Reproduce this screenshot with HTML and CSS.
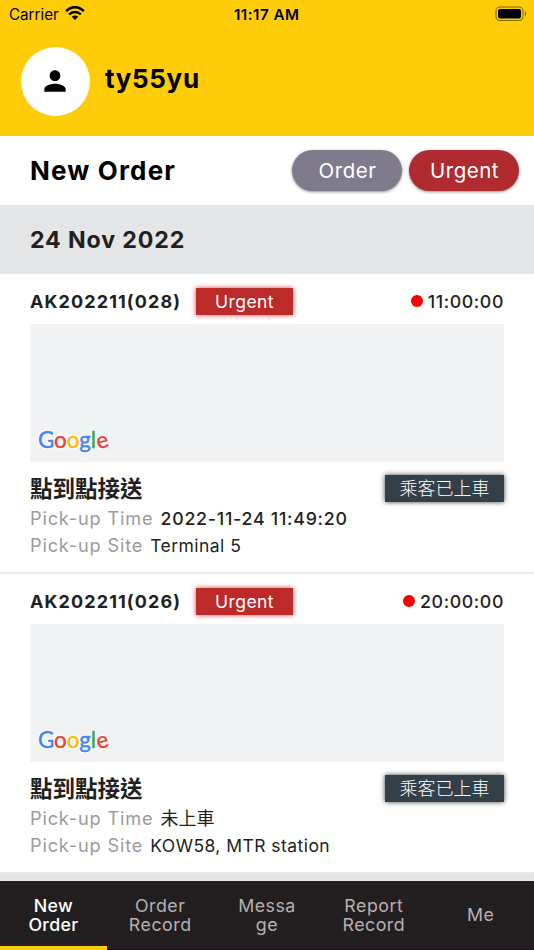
FILE: index.html
```html
<!DOCTYPE html>
<html lang="en">
<head>
<meta charset="utf-8">
<title>New Order</title>
<link rel="stylesheet" href="styles.css">
</head>
<body>
<div class="app">
  <header class="header">
    <div class="status">
      <div class="status-left"><span class="carrier">Carrier</span>
        <svg class="wifi" width="20" height="14" viewBox="0 0 20 14" fill="none" stroke="#000" stroke-width="2.5"><path d="M1.200 5.200C6-.2 14-.2 18.800 5.200M4.200 8.500c3.200-3.500 8.400-3.500 11.600 0"/><path d="M10 14l-3.200-3.200c1.800-1.700 4.600-1.700 6.400 0z" fill="#000" stroke="none"/></svg>
      </div>
      <span class="clock">11:17 AM</span>
      <svg class="battery" width="32" height="16" viewBox="0 0 32 16"><rect x="1" y="1" width="27" height="13.500" rx="4" fill="none" stroke="#000" stroke-opacity=".48" stroke-width="1.100"/><rect x="3" y="3" width="23" height="9.500" rx="2"/><path d="M29.800 5.600c1.700.6 1.700 4 0 4.600z" opacity=".5"/></svg>
    </div>
    <div class="profile">
      <div class="avatar"><svg width="32" height="32" viewBox="0 0 24 24"><path d="M12 12c2.210 0 4-1.790 4-4s-1.790-4-4-4-4 1.790-4 4 1.790 4 4 4zm0 2c-2.670 0-8 1.340-8 4v2h16v-2c0-2.660-5.330-4-8-4z"/></svg></div>
      <span class="username">ty55yu</span>
    </div>
  </header>
  <section class="toolbar">
    <h1 class="title">New Order</h1>
    <button class="pill">Order</button>
    <button class="pill pill-urgent">Urgent</button>
  </section>
  <h2 class="date">24 Nov 2022</h2>
  <main class="orders">
    <article class="card">
      <div class="card-top"><span class="order-id">AK202211(028)</span><span class="tag tag-urgent">Urgent</span><span class="time"><i class="dot"></i>11:00:00</span></div>
      <div class="map"><span class="google"><b class="blue">G</b><b class="red">o</b><b class="yellow">o</b><b class="blue">g</b><b class="green">l</b><b class="red tilt">e</b></span></div>
      <div class="service"><h3 class="service-name">點到點接送</h3><span class="tag tag-status">乘客已上車</span></div>
      <p class="line"><span class="label">Pick-up Time</span><span class="value stamp">2022-11-24 11:49:20</span></p>
      <p class="line"><span class="label">Pick-up Site</span><span class="value">Terminal 5</span></p>
    </article>
    <article class="card">
      <div class="card-top"><span class="order-id">AK202211(026)</span><span class="tag tag-urgent">Urgent</span><span class="time"><i class="dot"></i>20:00:00</span></div>
      <div class="map"><span class="google"><b class="blue">G</b><b class="red">o</b><b class="yellow">o</b><b class="blue">g</b><b class="green">l</b><b class="red tilt">e</b></span></div>
      <div class="service"><h3 class="service-name">點到點接送</h3><span class="tag tag-status">乘客已上車</span></div>
      <p class="line"><span class="label">Pick-up Time</span><span class="value cjk">未上車</span></p>
      <p class="line"><span class="label">Pick-up Site</span><span class="value">KOW58, MTR station</span></p>
    </article>
  </main>
  <nav class="tabs">
    <a class="tab active">New<br>Order</a>
    <a class="tab">Order<br>Record</a>
    <a class="tab">Messa<br>ge</a>
    <a class="tab">Report<br>Record</a>
    <a class="tab">Me</a>
  </nav>
</div>
</body>
</html>
```
FILE: styles.css
```css
* { box-sizing: border-box; }
body, h1, h2, h3, p { margin: 0; }
body {
  font-family: Inter, "Noto Sans CJK TC", sans-serif;
  color: #231f20;
  background: #e4e5e7;
}
.app { height: 950px; display: flex; flex-direction: column; overflow: hidden; }

.header { height: 136px; background: #fecc09; color: #000; flex: none; }
.status {
  height: 28px; padding: 0 7px 0 9px;
  display: grid; grid-template-columns: 225px auto 1fr; align-items: center;
  font-size: 15.2px;
}
.status-left { display: flex; align-items: center; gap: 6px; }
.wifi { margin-top: -2px; }
.clock { font-weight: 600; font-size: 15.2px; letter-spacing: 0.45px; }
.battery { justify-self: end; margin-top: -1px; }
.profile { display: flex; align-items: center; gap: 15px; padding: 19px 21px 0; }
.avatar {
  width: 69px; height: 69px; border-radius: 50%; background: #fff;
  display: flex; align-items: center; justify-content: center; padding: 0 1px 1px 0;
}
.username { font-size: 26px; font-weight: 650; letter-spacing: 0.65px; margin-top: -6px; }

.toolbar {
  height: 69px; flex: none; background: #fff; padding: 0 15px 0 30px;
  display: flex; align-items: center; gap: 7px;
}
.title { flex: 1; font-size: 26px; font-weight: 650; letter-spacing: 1.15px; color: #000; }
.pill {
  width: 110px; height: 41px; border: 0; border-radius: 21px; padding: 0 0 0 1px;
  background: #807b8c; color: #fff; font: 400 20.5px Inter, sans-serif; letter-spacing: 0.5px;
  box-shadow: 0 1px 3px rgba(0, 0, 0, .45);
}
.pill-urgent { background: #b02b30; }
.date {
  height: 69px; flex: none; background: #e4e5e7; padding-left: 30px;
  font-size: 23.2px; line-height: 70px; font-weight: 650; letter-spacing: 0.85px;
}

.card { height: 300px; background: #fff; padding: 0 30px; border-bottom: 2px solid #e9e9ea; }
.card-top { height: 50px; padding-top: 4px; display: flex; align-items: center; }
.order-id { width: 166px; font-size: 18px; font-weight: 700; letter-spacing: 1.1px; white-space: nowrap; }
.tag { color: #fff; text-align: center; height: 27px; line-height: 27px; font-size: 17.6px; letter-spacing: 0.4px; }
.tag-urgent { width: 97px; background: #bd2a2a; box-shadow: 0 0 5px rgba(200, 30, 30, .85); }
.time { margin-left: auto; display: flex; align-items: center; gap: 5px; font-size: 17.8px; font-weight: 500; letter-spacing: 0.6px; }
.dot { width: 12px; height: 12px; border-radius: 50%; background: #f00; }
.map { height: 138px; background: #f0f2f4; display: flex; align-items: flex-end; padding: 0 0 7px 8px; }
.google {
  font: 400 22.5px/30px Lato, sans-serif; letter-spacing: -0.2px;
  -webkit-text-stroke: 0.5px currentColor;
  text-shadow: -1px -1px 1px #fff, 1px -1px 1px #fff, -1px 1px 1px #fff, 1px 1px 1px #fff;
}
.google b { font-weight: inherit; -webkit-text-stroke-color: currentColor; }
.google .tilt { display: inline-block; transform: rotate(-15deg); }
.blue { color: #4285f4; }
.red { color: #ea4335; }
.yellow { color: #fbbc05; }
.green { color: #34a853; }
.service { height: 43px; padding-top: 9px; display: flex; align-items: center; justify-content: space-between; }
.service-name { font-size: 22.5px; line-height: 34px; margin-top: -2px; font-weight: 700; font-family: "Noto Sans CJK TC", sans-serif; }
.tag-status {
  width: 119px; background: #344049; font-weight: 300; font-size: 18px; line-height: 25px; letter-spacing: 0;
  font-family: "Noto Sans CJK TC", sans-serif; box-shadow: 0 0 5px rgba(0, 0, 0, .75);
}
.line { height: 27px; line-height: 27px; display: flex; gap: 7px; font-size: 17.5px; letter-spacing: 0.45px; white-space: nowrap; }
.label { color: #9b9b9b; font-size: 18.2px; letter-spacing: 0.82px; }
.cjk { font-size: 18px; letter-spacing: 0; }
.stamp { font-size: 17.8px; font-weight: 450; letter-spacing: 0.75px; }

.tabs {
  margin-top: auto; height: 69px; flex: none; background: #231f20;
  display: grid; grid-template-columns: repeat(5, 1fr);
}
.tab {
  display: flex; align-items: center; justify-content: center; text-align: center;
  color: #b5b1b2; font-size: 17.8px; line-height: 19px; letter-spacing: 0.5px;
  padding-bottom: 1px; border-bottom: 1px solid #1a1017;
}
.active { color: #fff; border-bottom: 4px solid #fecc09; padding: 2px 0 0; font-weight: 500; letter-spacing: 0.3px; }
```
